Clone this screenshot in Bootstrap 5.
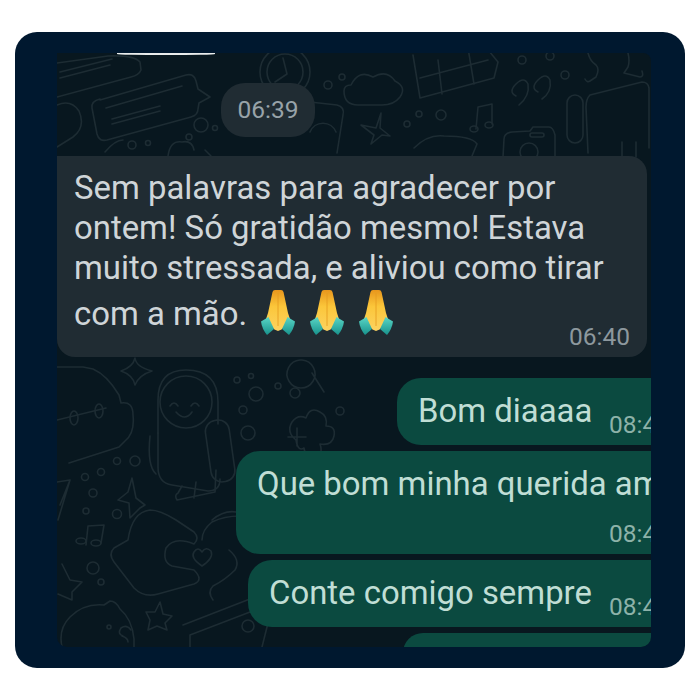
<!DOCTYPE html>
<html lang="pt">
<head>
    <meta charset="UTF-8">
    <meta name="viewport" content="width=device-width, initial-scale=1.0">
    <title>Conversa</title>
    <link href="https://cdn.jsdelivr.net/npm/bootstrap@5.3.0/dist/css/bootstrap.min.css" rel="stylesheet">
    <style>
        body {
            background: #fff;
            font-family: Roboto, "Liberation Sans", sans-serif;
        }
        .frame-box {
            margin: 32px 15px;
            height: 636px;
            padding: 21px 34px 21px 42px;
            background: #00182f;
            border-radius: 22px;
        }
        .chat-area {
            height: 594px;
            padding-top: 30px;
            background: #08171f;
            border-radius: 0 8px 10px 10px;
            overflow: hidden;
        }
        .chat-area > div { flex-shrink: 0; }
        .doodles {
            top: 0;
            left: 0;
            width: 594px;
            height: 594px;
            fill: none;
            stroke: #1d2c33;
            stroke-width: 1.6;
            stroke-linecap: round;
            stroke-linejoin: round;
        }
        .white-scrap {
            top: 0;
            left: 60px;
            width: 98px;
            height: 2px;
            background: #e9ecec;
            border-radius: 0 0 50% 50%;
        }
        .time-pill {
            width: 94px;
            height: 54px;
            margin-left: 164px;
            background: #202c33;
            border-radius: 24px;
            color: #98a3a9;
            font-size: 24.5px;
        }
        .msg-in {
            width: 590px;
            margin-top: 19px;
            padding: 12px 17px 5px;
            background: #202c33;
            border-radius: 0 18px 18px 18px;
            color: #cfd5d8;
        }
        .msg-text {
            font-size: 32.9px;
            line-height: 40px;
        }
        .msg-out {
            margin-right: -36px;
            margin-top: 6px;
            padding: 13px 17px 14px 21px;
            background: #0b4a40;
            border-radius: 24px 0 0 24px;
            color: #c0ded5;
            white-space: nowrap;
        }
        .msg-time {
            font-size: 24.5px;
            line-height: 30px;
            color: #8db2a9;
        }
        .msg-in .msg-time { color: #8d989e; }
        .last-row { height: 64px; }
        .last-row .msg-text { margin-top: 6px; margin-right: 14px; }
        .last-row .msg-time { margin-top: 34px; }
        .pray-icon { width: 34px; height: 45px; margin-top: 2px; margin-right: 15px; }
        .out-first { width: 290px; margin-top: 21px; }
        .out-long { width: 451px; padding-bottom: 5px; }
        .out-mid { width: 439px; }
        .out-last { width: 284px; height: 40px; }
        .time-low { margin-top: 19px; margin-bottom: -9px; }
        .time-under { margin-top: 15px; margin-left: 352px; }
    </style>
</head>
<body>
    <div class="frame-box">
        <div class="chat-area position-relative d-flex flex-column">
            <!-- fundo com os desenhos do papel de parede -->
            <svg class="doodles position-absolute" viewBox="57 53 594 594">
                <path d="M57 63 108 56q26 -1 32 6l1 8q-2 5 -10 7l-74 20"/>
                <path d="M60 72 112 59M60 78 110 65"/>
                <path d="M100 100 186 75q8 -2 10 6l2 8 12 8-11 6-1 6q0 6-7 8l-84 23q-8 2-10-6l-5-26q-1-7 8-9z"/>
                <path d="M106 108 182 86M112 119 160 106M112 124 160 111"/>
                <path d="M57 105q14-6 22 6 7 16-6 26l-16 10"/>
                <circle cx="285" cy="72" r="25"/><circle cx="285" cy="72" r="18"/>
                <path d="M283 58 287 74 275 82"/>
                <circle cx="201" cy="125" r="7"/><circle cx="215" cy="128" r="2.5"/><circle cx="189" cy="137" r="3"/>
                <circle cx="132" cy="145" r="4"/><circle cx="148" cy="143" r="2.5"/>
                <path d="M105 152q10-12 18-12M168 156q2-16 14-14 10-2 12 8M205 150l6 6"/>
                <circle cx="342" cy="77" r="3"/><circle cx="328" cy="85" r="4"/>
                <path d="M292 100 337 105q8 2 6 10l-6 38M310 132a14 14 0 0 1 26 0"/>
                <path d="M351 85q8-16 22-8 14-8 22 4 12 6 5 16-6 8-18 8h-24q-14 0-14-14 0-6 7-6z"/>
                <path d="M413 55 420 98 494 78 498 62 480 40M420 78 488 60M438 60 442 94M468 48 474 84"/>
                <circle cx="522" cy="60" r="4"/><circle cx="550" cy="56" r="4"/><circle cx="565" cy="75" r="4"/>
                <path d="M516 84q8-8 12 0 2 12-9 21M516 84q-8 8 0 12M538 80q8-8 12 0 2 12-8 19M538 80q-8 8 0 12"/>
                <path d="M588 53q2 8 8 12 4 4 0 12l-6 4q-3 2-5-2M628 53q2 8 0 14l-4 6 16 4q4 0 2-6"/>
                <path d="M590 95 642 82q6 0 7 6v60M590 95q-4 4-4 12l2 46"/>
                <rect x="567" y="95" width="16" height="48" rx="8"/>
                <path d="M622 142v15M636 142v15"/>
                <path d="M476 129 478 107 492 104 492 124"/>
                <ellipse cx="474" cy="129" rx="4" ry="3"/><ellipse cx="489" cy="125" rx="4" ry="3"/>
                <path d="M381 113 376 128 361 125 374 135 371 144 382 135 390 136 380 128z"/>
                <circle cx="407" cy="124" r="3"/><circle cx="419" cy="114" r="3"/><circle cx="441" cy="115" r="5"/>
                <path d="M414 148q14-14 30-12 28 0 33 8l-5 12"/>
                <path d="M503 157 504 139q0-6 8-7l18-1 3-4h16q4 0 6 8v22"/>
                <rect x="530" y="133" width="14" height="4" rx="2"/>
                <circle cx="529" cy="152" r="9"/>
                <path d="M57 367q10 0 26 0l10 2q14 6 26 26l2 8q12-2 12 12 2 18-8 26l-6 6-50 16"/>
                <path d="M57 420 106 408"/>
                <ellipse cx="74" cy="418" rx="4" ry="7"/><ellipse cx="99" cy="411" rx="4" ry="7"/>
                <path d="M135 358q1 9 17 13-13 4-17 14-2-10-14-14 12-4 14-13z"/>
                <path d="M158 433V400q0-30 28-30 32 0 32 32v22"/>
                <circle cx="186" cy="402" r="26"/>
                <path d="M170 406q4-6 8 0M191 406q4-6 8 0M176 412q9 10 16 0"/>
                <rect x="208" y="420" width="24" height="62" rx="11" transform="rotate(-8 220 450)"/>
                <path d="M158 433v34q0 16 14 18l36 6q12 0 12-12M150 436q-3 30 6 38"/>
                <path d="M182 486 178 493q-4 2-1 7l38-8 1-22M196 482l-2 16"/>
                <circle cx="237" cy="380" r="3"/><circle cx="251" cy="376" r="2.500"/><circle cx="256" cy="394" r="7"/>
                <circle cx="243" cy="410" r="4"/><circle cx="248" cy="433" r="7"/><circle cx="278" cy="386" r="3"/>
                <circle cx="295" cy="393" r="5"/><circle cx="340" cy="411" r="4"/>
                <path d="M302 360a14 14 0 1 1-2 0zM312 373 324 392"/>
                <path d="M296 440q-10-8-4-18 6-8 14-4 4-12 14-6 8 4 6 14 10 0 8 10-2 10-14 8 4 12-6 14-8 2-10-10-6 4-8-8zM288 437h18M297 428v18"/>
                <circle cx="117" cy="461" r="3.500"/><circle cx="135" cy="461" r="5"/><circle cx="85" cy="477" r="3.500"/><circle cx="101" cy="472" r="3.500"/>
                <circle cx="93" cy="493" r="4"/><circle cx="86" cy="511" r="3"/><circle cx="117" cy="514" r="4.500"/>
                <path d="M132 478 128 492 118 500 129 503 130 518 140 508 145 505 136 498z"/>
                <path d="M57 482 70 480 58 520M70 480 60 505"/>
                <path d="M88 526 86 545M88 526 104 525 101 543"/>
                <ellipse cx="81" cy="541" rx="5" ry="3"/><ellipse cx="96" cy="543" rx="5" ry="3"/>
                <path d="M150 510q-18 2-22 30l-14 8q-6 6 0 14l20 26q10 10 24 6l36-10q10-4 0-14l-22-4q-10-4-6-18 8-12 28-4 6-6 0-12l-18-12q-16-10-26-10z"/>
                <path d="M212 520q12-10 24-8M202 540q0-10 10-18 12-6 28-6M213 600q-6-8 0-14 12-6 22-16 6-10-6-20"/>
                <path d="M202 566q-12-8-8-14 4-6 8 0 4-6 9-1 3 7-9 15z"/>
                <circle cx="93" cy="568" r="6"/><circle cx="101" cy="582" r="3"/>
                <path d="M62 564 70 580 82 582 72 592 72 600 58 594"/>
                <path d="M160 602 163 614 172 616 165 623 167 630 157 626 148 630 150 620 146 612 155 612z"/>
                <path d="M62 647q-4-18 8-30 14-14 34-12l6-4q6 0 10 8 12 10 14 30v8"/>
                <circle cx="109" cy="627" r="2"/>
                <path d="M123 636q-6-2-2-8 6-4 10 2M122 636q6 2 6 6"/>
                <path d="M183 625 260 595l8 28-6 24M190 635 250 612M190 647V635"/>
                <circle cx="248" cy="626" r="6"/>
            </svg>
            <div class="white-scrap position-absolute"></div>

            <div class="time-pill d-flex align-items-center justify-content-center position-relative">06:39</div>

            <div class="msg-in position-relative">
                <div class="msg-text">Sem palavras para agradecer por ontem! Só gratidão mesmo! Estava muito stressada, e aliviou como tirar</div>
                <div class="last-row d-flex align-items-start">
                    <span class="msg-text">com a mão.</span>
                    <svg class="pray-icon" viewBox="0 0 34 45"><use href="#pray"/></svg>
                    <svg class="pray-icon" viewBox="0 0 34 45"><use href="#pray"/></svg>
                    <svg class="pray-icon" viewBox="0 0 34 45"><use href="#pray"/></svg>
                    <span class="msg-time ms-auto">06:40</span>
                </div>
            </div>

            <div class="msg-out out-first align-self-end d-flex justify-content-between position-relative">
                <span class="msg-text">Bom diaaaa</span>
                <span class="msg-time time-low">08:41</span>
            </div>
            <div class="msg-out out-long align-self-end position-relative">
                <div class="msg-text">Que bom minha querida amiga</div>
                <div class="msg-time time-under">08:41</div>
            </div>
            <div class="msg-out out-mid align-self-end d-flex justify-content-between position-relative">
                <span class="msg-text">Conte comigo sempre</span>
                <span class="msg-time time-low">08:41</span>
            </div>
            <div class="msg-out out-last align-self-end position-relative"></div>
        </div>
    </div>

    <!-- emoji das maos, reutilizado com use -->
    <svg width="0" height="0" class="position-absolute">
        <defs>
            <linearGradient id="handFill" x1="0" y1="0" x2="0" y2="1">
                <stop offset="0" stop-color="#e8961c"/>
                <stop offset="0.4" stop-color="#fbc63a"/>
                <stop offset="1" stop-color="#fcd360"/>
            </linearGradient>
            <linearGradient id="cuffFill" x1="0" y1="0" x2="0" y2="1">
                <stop offset="0" stop-color="#5ad6c6"/>
                <stop offset="1" stop-color="#17928c"/>
            </linearGradient>
            <g id="pray">
                <path fill="url(#handFill)" d="M11.500 2q.5-2 2.500-2h3v41l-3.500-1.500L7 33l-2-4 2-6z"/>
                <path fill="url(#handFill)" d="M22.500 2q-.5-2-2.500-2h-3v41l3.500-1.500L27 33l2-4-2-6z"/>
                <path fill="none" stroke="#e59a1f" stroke-width="0.8" d="M17 3V36"/>
                <path fill="url(#cuffFill)" d="M0 31.500 7.500 27 13 39l-7 6Q1 39 0 31.500z"/>
                <path fill="url(#cuffFill)" d="M34 31.500 26.500 27 21 39l7 6Q33 39 34 31.500z"/>
            </g>
        </defs>
    </svg>

    <script src="https://cdn.jsdelivr.net/npm/bootstrap@5.3.0/dist/js/bootstrap.bundle.min.js"></script>
</body>
</html>
